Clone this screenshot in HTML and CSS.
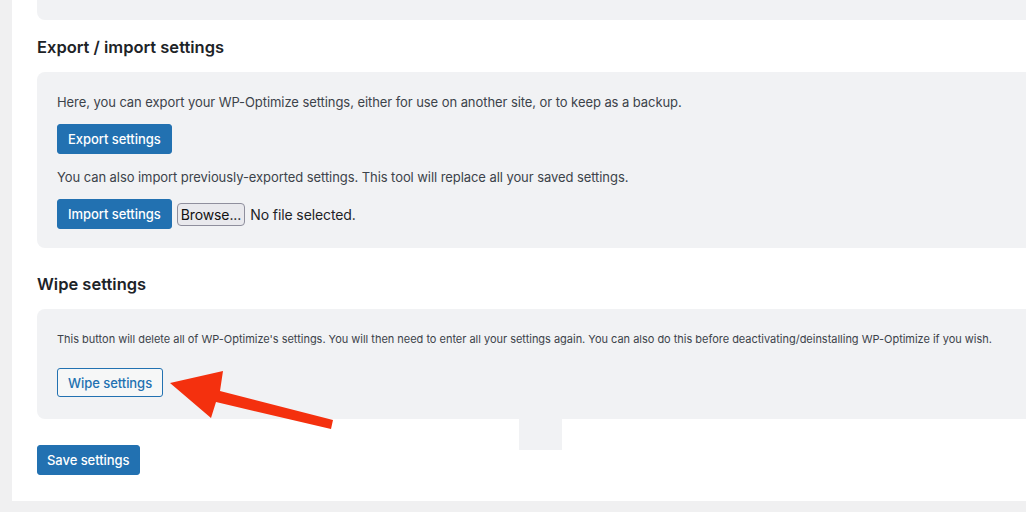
FILE: index.html
```html
<!DOCTYPE html>
<html>
<head>
    <title>WP-Optimize settings</title>
    <link rel="stylesheet" href="styles.css">
</head>
<body>
    <div class="page">
        <div class="panel">
            <div class="box box-top"></div>

            <h2>Export / import settings</h2>
            <div class="box box-export">
                <p>Here, you can export your WP-Optimize settings, either for use on another site, or to keep as a backup.</p>
                <div class="row"><span class="btn btn-primary">Export settings</span></div>
                <p>You can also import previously-exported settings. This tool will replace all your saved settings.</p>
                <div class="row">
                    <span class="btn btn-primary">Import settings</span>
                    <span class="browse">Browse...</span>
                    <span class="nofile">No file selected.</span>
                </div>
            </div>

            <h2>Wipe settings</h2>
            <div class="box box-wipe">
                <p class="small">This button will delete all of WP-Optimize's settings. You will then need to enter all your settings again. You can also do this before deactivating/deinstalling WP-Optimize if you wish.</p>
                <div class="row"><span class="btn btn-secondary">Wipe settings</span></div>
            </div>

            <div class="save-row"><span class="btn btn-primary">Save settings</span></div>
        </div>

        <!-- leftover block under the wipe box -->
        <div class="stray"></div>

        <!-- red annotation arrow -->
        <svg class="arrow" width="1026" height="512" viewBox="0 0 1026 512">
            <polygon fill="#f4300e" points="170,383 223,371 220,391 333,420 331,429 216,402 211,418"/>
        </svg>
    </div>
</body>
</html>
```

FILE: styles.css
```css
/* page frame */
body, html {
    margin: 0;
    height: 100%;
    background: #f0f0f1;
    font-family: "Inter", "Noto Sans", sans-serif;
    color: #3c434a;
}

.page {
    position: relative;
    height: 512px;
    overflow: hidden;
}

.panel {
    margin-left: 12px;
    background: #fff;
    padding: 0 0 26px 25px;
}

/* grey setting boxes */
.box {
    background: #f1f2f4;
    border-radius: 8px 0 0 8px;
}

.box-top {
    height: 20px;
    border-radius: 0 0 0 8px;
}

.box-export {
    padding: 20px 20px 19px;
}

.box-wipe {
    padding: 22px 20px 22px;
}

h2 {
    margin: 15px 0 13px;
    font-size: 16.5px;
    line-height: 24px;
    font-weight: 600;
    color: #1d2327;
}

.box-export + h2 {
    margin-top: 24px;
}

p {
    margin: 0;
    font-size: 13px;
    line-height: 20px;
    letter-spacing: -0.07px;
    white-space: nowrap;
}

.box-export .row {
    margin: 12px 0 13px;
}

.box-export .row:last-child {
    margin-bottom: 0;
}

p.small {
    font-size: 11px;
    line-height: 16px;
    letter-spacing: -0.02px;
}

.box-wipe .row {
    margin-top: 21px;
}

.row {
    display: flex;
    align-items: center;
}

/* buttons */
.btn {
    display: inline-flex;
    align-items: center;
    box-sizing: border-box;
    height: 30px;
    padding: 0 10px;
    border-radius: 3px;
    font-size: 13px;
    font-weight: 500;
    letter-spacing: -0.05px;
    white-space: nowrap;
}

.btn-primary {
    background: #2271b1;
    border: 1px solid #2271b1;
    color: #fff;
}

.btn-secondary {
    height: 29px;
    background: #f6f7f7;
    border: 1px solid #2271b1;
    color: #2271b1;
}

.save-row {
    margin-top: 26px;
    display: flex;
}

.save-row .btn {
    padding: 0 9px;
}

.browse {
    margin-left: 5px;
    box-sizing: border-box;
    height: 23px;
    padding: 0 3px;
    display: inline-flex;
    align-items: center;
    background: #e9e9ed;
    border: 1px solid #8f8f9d;
    border-radius: 4px;
    font-size: 14px;
    letter-spacing: -0.1px;
    color: #111;
}

.nofile {
    margin-left: 5px;
    font-size: 14px;
    letter-spacing: -0.1px;
    color: #1d2327;
}

/* overlays */
.stray {
    position: absolute;
    left: 519px;
    top: 418px;
    width: 43px;
    height: 32px;
    background: #f1f2f4;
}

.arrow {
    position: absolute;
    left: 0;
    top: 0;
    pointer-events: none;
}
```
